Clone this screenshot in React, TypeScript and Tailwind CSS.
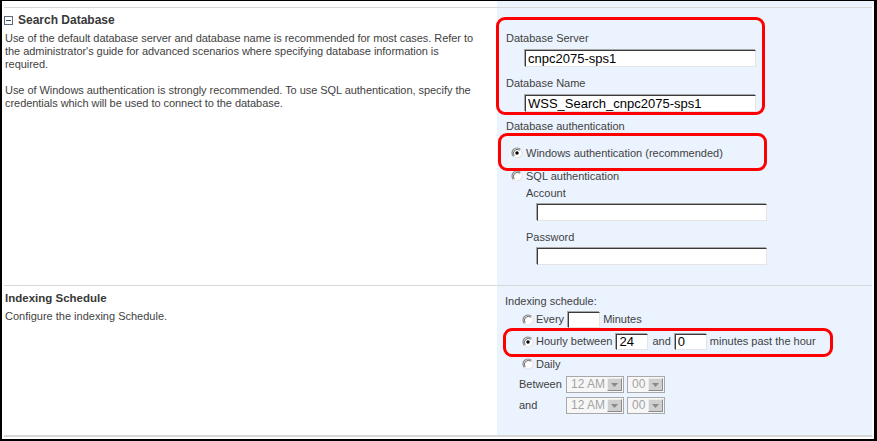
import React from "react";

const Radio = ({ checked = false }: { checked?: boolean }) => (
  <svg width="12" height="12" viewBox="0 0 12 12" className="shrink-0">
    <circle cx="6" cy="6" r="5" fill="#ffffff" />
    <path d="M2.46 9.54 A5 5 0 0 1 9.54 2.46" fill="none" stroke="#8a8a8a" strokeWidth="1.2" />
    <path d="M9.54 2.46 A5 5 0 0 1 2.46 9.54" fill="none" stroke="#e6e6e6" strokeWidth="1.2" />
    <path d="M3.2 8.8 A4 4 0 0 1 8.8 3.2" fill="none" stroke="#404040" strokeWidth="0.8" />
    {checked && <circle cx="6" cy="6" r="1.7" fill="#000000" />}
  </svg>
);

// classic inset box: dark inner edge top/left, light bottom/right, grey outer edge
const insetBox =
  "bg-white border border-t-[#3a3a3a] border-l-[#3a3a3a] border-r-[#e4e4e4] border-b-[#e4e4e4] shadow-[-1px_-1px_0_#a8a8a8] outline-none";

const TextBox = ({ value = "", w }: { value?: string; w: string }) => (
  <input
    readOnly
    defaultValue={value}
    className={`${w} ${insetBox} h-[17px] py-0 pl-[2px] text-[13px] leading-[15px] text-black font-['Liberation_Sans',Arial,sans-serif]`}
  />
);

const DisabledSelect = ({ value, w }: { value: string; w: string }) => (
  <div className={`${w} h-[17px] flex items-stretch border border-[#a9a9a9] bg-[#f7f7f7] p-[1px]`}>
    <div className="flex-1 pl-[3px] text-[12px] leading-[13px] text-[#a3a3a3]">{value}</div>
    <div className="w-[15px] flex items-center justify-center bg-[#cfcfcf] border border-t-[#ececec] border-l-[#ececec] border-r-[#8c8c8c] border-b-[#8c8c8c]">
      <svg width="7" height="4" viewBox="0 0 7 4">
        <path d="M0 0 H7 L3.5 4 Z" fill="#8a8a8a" />
      </svg>
    </div>
  </div>
);

const MinusIcon = () => (
  <svg width="9" height="9" viewBox="0 0 9 9" className="shrink-0">
    <rect x="0.5" y="0.5" width="8" height="8" fill="#ffffff" stroke="#5d6b78" />
    <path d="M2 4.5 H7" stroke="#3d4a56" strokeWidth="1" />
  </svg>
);

export default function App() {
  return (
    <div className="relative w-[877px] h-[441px] bg-white border-t border-l-2 border-r-[3px] border-b-2 border-black pl-[2px] pr-[2px] pb-[2px] text-[11px] text-[#3f3f3f] font-['Liberation_Sans',Arial,sans-serif]">
      <div className="flex flex-col">
        {/* top spacer */}
        <div className="grid grid-cols-[493px_375px] h-[6px]">
          <div />
          <div className="bg-[#ebf3fe]" />
        </div>

        {/* Search Database */}
        <div className="grid grid-cols-[493px_375px] h-[278px] border-t border-[#d8d8d8]">
          <div className="pt-[5px] pl-[1px]">
            <div className="flex items-center gap-[5px] h-[14px] -ml-[1px]">
              <MinusIcon />
              <span className="text-[12px] font-bold text-[#383838] leading-[14px]">Search Database</span>
            </div>
            <p className="mt-[5px] leading-[13px] whitespace-nowrap tracking-[-0.05px]">
              Use of the default database server and database name is recommended for most cases. Refer to
              <br />
              the administrator's guide for advanced scenarios where specifying database information is
              <br />
              required.
              <br />
              <br />
              Use of Windows authentication is strongly recommended. To use SQL authentication, specify the
              <br />
              credentials which will be used to connect to the database.
            </p>
          </div>
          <div className="bg-[#ebf3fe] pt-[23px] pl-[9px]">
            <div className="h-[14px] leading-[14px]">Database Server</div>
            <div className="mt-[5px] pl-[19px]">
              <TextBox value="cnpc2075-sps1" w="w-[231px]" />
            </div>
            <div className="mt-[8px] h-[14px] leading-[14px]">Database Name</div>
            <div className="mt-[5px] pl-[19px]">
              <TextBox value="WSS_Search_cnpc2075-sps1" w="w-[231px]" />
            </div>
            <div className="mt-[7px] h-[14px] leading-[14px]">Database authentication</div>
            <div className="mt-[13px] ml-[5px] flex items-center gap-[3px] h-[14px]">
              <Radio checked />
              <span>Windows authentication (recommended)</span>
            </div>
            <div className="mt-[9px] ml-[5px] flex items-center gap-[3px] h-[14px]">
              <Radio />
              <span>SQL authentication</span>
            </div>
            <div className="mt-[3px] pl-[20px] h-[14px] leading-[14px]">Account</div>
            <div className="mt-[4px] pl-[31px]">
              <TextBox w="w-[230px]" />
            </div>
            <div className="mt-[8px] pl-[20px] h-[14px] leading-[14px]">Password</div>
            <div className="mt-[4px] pl-[31px]">
              <TextBox w="w-[230px]" />
            </div>
          </div>
        </div>

        {/* Indexing Schedule */}
        <div className="grid grid-cols-[493px_375px] h-[150px] border-t border-[#d8d8d8]">
          <div className="pt-[5px] pl-[1px]">
            <div className="h-[14px] leading-[14px] text-[11.5px] font-bold text-[#383838]">Indexing Schedule</div>
            <div className="mt-[5px] leading-[13px]">Configure the indexing Schedule.</div>
          </div>
          <div className="bg-[#ebf3fe] pt-[8px] pl-[8px]">
            <div className="h-[14px] leading-[14px]">Indexing schedule:</div>
            <div className="mt-[3px] ml-[17px] flex items-center h-[17px]">
              <Radio />
              <span className="ml-[2px]">Every</span>
              <div className={`ml-[4px] w-[32px] h-[16px] ${insetBox}`} />
              <span className="ml-[3px]">Minutes</span>
            </div>
            <div className="mt-[5px] ml-[17px] flex items-center h-[17px]">
              <Radio checked />
              <span className="ml-[2px]">Hourly between</span>
              <input
                readOnly
                defaultValue="24"
                className={`ml-[4px] w-[32px] h-[16px] ${insetBox} py-0 pl-[2px] text-[13px] leading-[15px] text-black`}
              />
              <span className="ml-[4px]">and</span>
              <input
                readOnly
                defaultValue="0"
                className={`ml-[4px] w-[32px] h-[16px] ${insetBox} py-0 pl-[2px] text-[13px] leading-[15px] text-black`}
              />
              <span className="ml-[3px]">minutes past the hour</span>
            </div>
            <div className="mt-[7px] ml-[17px] flex items-center h-[14px]">
              <Radio />
              <span className="ml-[2px]">Daily</span>
            </div>
            <div className="mt-[5px] ml-[14px] flex items-center h-[17px]">
              <span className="w-[47px]">Between</span>
              <DisabledSelect value="12 AM" w="w-[58px]" />
              <div className="ml-[3px]">
                <DisabledSelect value="00" w="w-[38px]" />
              </div>
            </div>
            <div className="mt-[4px] ml-[14px] flex items-center h-[17px]">
              <span className="w-[47px]">and</span>
              <DisabledSelect value="12 AM" w="w-[58px]" />
              <div className="ml-[3px]">
                <DisabledSelect value="00" w="w-[38px]" />
              </div>
            </div>
          </div>
        </div>

        {/* bottom rule */}
        <div className="h-[2px] bg-[#d8d8d8]" />
      </div>

      {/* red annotation outlines */}
      <div className="absolute left-[494px] top-[16px] w-[269px] h-[98px] border-[3px] border-[#ff0000] rounded-[9px]" />
      <div className="absolute left-[496px] top-[132px] w-[269px] h-[38px] border-[3px] border-[#ff0000] rounded-[9px]" />
      <div className="absolute left-[501px] top-[327px] w-[330px] h-[29px] border-[3px] border-[#ff0000] rounded-[9px]" />
    </div>
  );
}
